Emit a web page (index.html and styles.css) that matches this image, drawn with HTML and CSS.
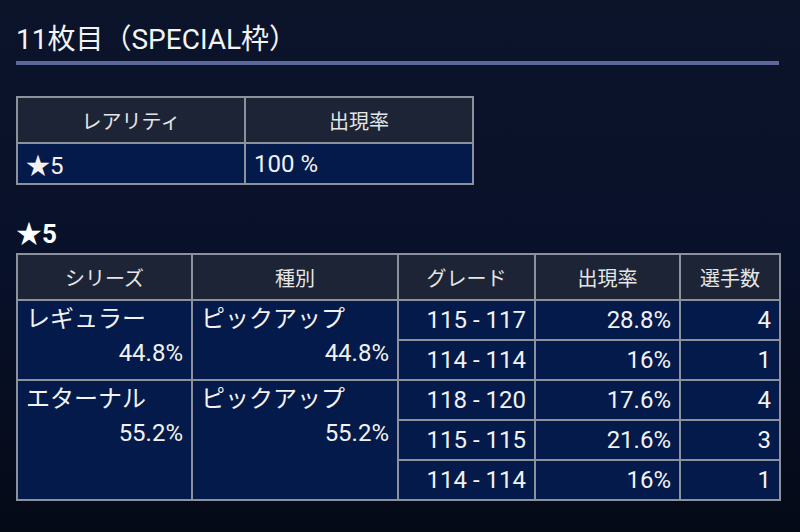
FILE: index.html
```html
<!DOCTYPE html>
<html lang="ja">
<head>
<meta charset="utf-8">
<link rel="stylesheet" href="styles.css">
</head>
<body>
<div class="page">
  <h1 class="title">11枚目（SPECIAL枠）</h1>

  <table class="tbl tbl-rarity">
    <colgroup><col class="c-half"><col class="c-half"></colgroup>
    <thead>
      <tr><th>レアリティ</th><th>出現率</th></tr>
    </thead>
    <tbody>
      <tr><td class="left">★5</td><td class="left">100 %</td></tr>
    </tbody>
  </table>

  <h2 class="rank">★5</h2>

  <table class="tbl tbl-detail">
    <colgroup>
      <col class="c1"><col class="c2"><col class="c3"><col class="c4"><col class="c5">
    </colgroup>
    <thead>
      <tr><th>シリーズ</th><th>種別</th><th>グレード</th><th>出現率</th><th>選手数</th></tr>
    </thead>
    <tbody>
      <tr>
        <td class="group" rowspan="2"><div class="name">レギュラー</div><div class="pct">44.8%</div></td>
        <td class="group" rowspan="2"><div class="name">ピックアップ</div><div class="pct">44.8%</div></td>
        <td class="num">115 - 117</td><td class="num">28.8%</td><td class="num">4</td>
      </tr>
      <tr><td class="num">114 - 114</td><td class="num">16%</td><td class="num">1</td></tr>
      <tr>
        <td class="group" rowspan="3"><div class="name">エターナル</div><div class="pct">55.2%</div></td>
        <td class="group" rowspan="3"><div class="name">ピックアップ</div><div class="pct">55.2%</div></td>
        <td class="num">118 - 120</td><td class="num">17.6%</td><td class="num">4</td>
      </tr>
      <tr><td class="num">115 - 115</td><td class="num">21.6%</td><td class="num">3</td></tr>
      <tr><td class="num">114 - 114</td><td class="num">16%</td><td class="num">1</td></tr>
    </tbody>
  </table>
</div>
</body>
</html>
```

FILE: styles.css
```css
html, body {
  margin: 0;
  padding: 0;
  height: 100%;
}
body {
  background: linear-gradient(180deg, #0b1429 0%, #08112a 50%, #050a17 100%);
  color: #f2f2f2;
  font-family: Roboto, "Noto Sans CJK JP", sans-serif;
  overflow: hidden;
}
.page {
  padding: 0 21px 0 16px;
}
.title {
  margin: 0;
  padding-top: 20px;
  padding-bottom: 1px;
  font-size: 28px;
  line-height: 40px;
  font-weight: 400;
  color: #f4f4f4;
  border-bottom: 4px solid #5b6899;
}
.tbl {
  border-collapse: collapse;
  table-layout: fixed;
  border: 2px solid #8c919b;
}
.tbl th, .tbl td {
  border: 2px solid #8c919b;
  padding: 0 8px;
  white-space: nowrap;
  overflow: hidden;
}
.tbl th {
  background: #1d2436;
  font-weight: 400;
  font-size: 20px;
  color: #e6e6e6;
  text-align: center;
}
.tbl td {
  background: #041a4b;
  font-size: 24px;
  color: #f2f2f2;
}
.tbl-rarity {
  margin-top: 31px;
  width: 456px;
}
.tbl-rarity .c-half { width: 228px; }
.tbl-rarity th { height: 44px; }
.tbl-rarity td { height: 39px; }
.left { text-align: left; }

.rank {
  margin: 34px 0 4px;
  font-size: 26px;
  line-height: 30px;
  font-weight: 700;
  color: #ffffff;
}
.tbl-detail {
  width: 763px;
}
.tbl-detail .c1 { width: 175px; }
.tbl-detail .c2 { width: 206px; }
.tbl-detail .c3 { width: 137px; }
.tbl-detail .c4 { width: 145px; }
.tbl-detail .c5 { width: 100px; }
.tbl-detail th { height: 44px; }
.tbl-detail td { height: 38px; }
.tbl-detail td.num {
  text-align: right;
  vertical-align: middle;
}
.tbl-detail td.group {
  vertical-align: top;
  padding-top: 1px;
}
.group .name {
  line-height: 34px;
  text-align: left;
}
.group .pct {
  line-height: 34px;
  text-align: right;
}
```
